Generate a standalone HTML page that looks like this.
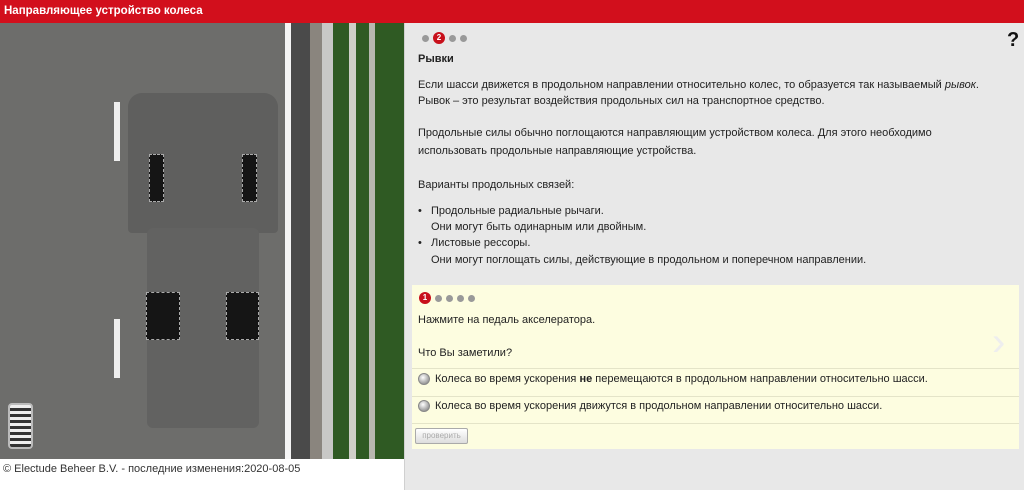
<!DOCTYPE html>
<html><head><meta charset="utf-8"><style>
*{margin:0;padding:0;box-sizing:border-box}
body{width:1024px;height:490px;overflow:hidden;background:#fff;font-family:"Liberation Sans",Arial,sans-serif;font-size:11px;color:#222;position:relative}
.hdr{position:absolute;left:0;top:0;width:1024px;height:23px;background:#d20f1c;color:#fff;font-weight:bold;font-size:11.5px;padding:5px 4px}
.scene{position:absolute;left:0;top:23px;width:404px;height:436px;background:#6d6d6b;overflow:hidden}
.right{position:absolute;left:404px;top:23px;width:620px;height:467px;background:#e8e8e8;border-left:1px solid #d0d0d0}
.abs{position:absolute}
.t{position:absolute;left:13px;white-space:nowrap;line-height:16px}
.dot{display:inline-block;width:7px;height:7px;border-radius:50%;background:#999;margin-right:4px;vertical-align:middle}
.num{display:inline-block;width:12px;height:12px;border-radius:50%;background:#c8101b;color:#fff;font-size:8px;font-weight:bold;text-align:center;line-height:12px;margin-right:4px;vertical-align:middle}
.box{position:absolute;left:7px;top:262px;width:607px;height:164px;background:#fdfde0}
.row{position:absolute;left:0;width:607px;border-top:1px solid #e4e4c8}
.radio{display:inline-block;width:12px;height:12px;border-radius:50%;background:radial-gradient(circle at 40% 35%,#fff,#aaa 60%,#777);border:1px solid #888;vertical-align:middle;margin-right:5px}
</style></head><body>
<div class="hdr">Направляющее устройство колеса</div>
<div class="scene">
 <div class="abs" style="left:285px;top:0;width:6px;height:436px;background:#f4f4f4"></div>
 <div class="abs" style="left:291px;top:0;width:19px;height:436px;background:#4a4a4a"></div>
 <div class="abs" style="left:310px;top:0;width:12px;height:436px;background:#8a857e"></div>
 <div class="abs" style="left:322px;top:0;width:11px;height:436px;background:#c8c8c6"></div>
 <div class="abs" style="left:333px;top:0;width:71px;height:436px;background:#2f5a23"></div>
 <div class="abs" style="left:349px;top:0;width:7px;height:436px;background:#cfcfc8"></div>
 <div class="abs" style="left:369px;top:0;width:6px;height:436px;background:#b8b8b0"></div>
 <div class="abs" style="left:114px;top:79px;width:6px;height:59px;background:#eee"></div>
 <div class="abs" style="left:114px;top:296px;width:6px;height:59px;background:#eee"></div>
 <div class="abs" style="left:128px;top:70px;width:150px;height:140px;background:#5f5f5e;border-radius:14px 14px 4px 4px"></div>
 <div class="abs" style="left:147px;top:205px;width:112px;height:200px;background:#626261;border-radius:6px"></div>
 <div class="abs" style="left:149px;top:131px;width:15px;height:48px;background:#151515;border:1px dashed #aaa"></div>
 <div class="abs" style="left:242px;top:131px;width:15px;height:48px;background:#151515;border:1px dashed #aaa"></div>
 <div class="abs" style="left:146px;top:269px;width:34px;height:48px;background:#151515;border:1px dashed #aaa"></div>
 <div class="abs" style="left:226px;top:269px;width:33px;height:48px;background:#151515;border:1px dashed #aaa"></div>
 <div class="abs" style="left:8px;top:380px;width:25px;height:46px;background:repeating-linear-gradient(#eee 0 3px,#333 3px 6px);border:2px solid #bbb;border-radius:4px"></div>
</div>
<div class="abs" style="left:3px;top:463px;font-size:11px;color:#333">© Electude Beheer B.V. - последние изменения:2020-08-05</div>
<div class="right">
 <div class="abs" style="left:17px;top:9px"><span class="dot"></span><span class="num">2</span><span class="dot"></span><span class="dot"></span></div>
 <div class="abs" style="left:602px;top:6px;font-size:20px;font-weight:bold;color:#111">?</div>
 <div class="t" style="top:28px;font-weight:bold">Рывки</div>
 <div class="t" style="top:54px">Если шасси движется в продольном направлении относительно колес, то образуется так называемый <i>рывок</i>.</div>
 <div class="t" style="top:70px">Рывок – это результат воздействия продольных сил на транспортное средство.</div>
 <div class="t" style="top:102px">Продольные силы обычно поглощаются направляющим устройством колеса. Для этого необходимо</div>
 <div class="t" style="top:120px">использовать продольные направляющие устройства.</div>
 <div class="t" style="top:154px">Варианты продольных связей:</div>
 <div class="t" style="top:180px">•&nbsp;&nbsp; Продольные радиальные рычаги.</div>
 <div class="t" style="top:196px;left:26px">Они могут быть одинарным или двойным.</div>
 <div class="t" style="top:212px">•&nbsp;&nbsp; Листовые рессоры.</div>
 <div class="t" style="top:229px;left:26px">Они могут поглощать силы, действующие в продольном и поперечном направлении.</div>
 <div class="box">
  <div class="abs" style="left:7px;top:7px"><span class="num">1</span><span class="dot"></span><span class="dot"></span><span class="dot"></span><span class="dot"></span></div>
  <div class="t" style="left:6px;top:27px">Нажмите на педаль акселератора.</div>
  <div class="t" style="left:6px;top:60px">Что Вы заметили?</div>
  <div class="abs" style="left:580px;top:35px;font-size:40px;color:#eee">›</div>
  <div class="row" style="top:83px;height:28px;padding:4px 6px"><span class="radio"></span>Колеса во время ускорения <b>не</b> перемещаются в продольном направлении относительно шасси.</div>
  <div class="row" style="top:111px;height:27px;padding:3px 6px"><span class="radio"></span>Колеса во время ускорения движутся в продольном направлении относительно шасси.</div>
  <div class="row" style="top:138px;height:26px;padding:4px 3px"><span style="display:inline-block;width:53px;height:16px;border:1px solid #aaa;border-radius:2px;background:linear-gradient(#fff,#ddd);color:#aaa;font-size:8px;text-align:center;line-height:14px">проверить</span></div>
 </div>
</div>
</body></html>
